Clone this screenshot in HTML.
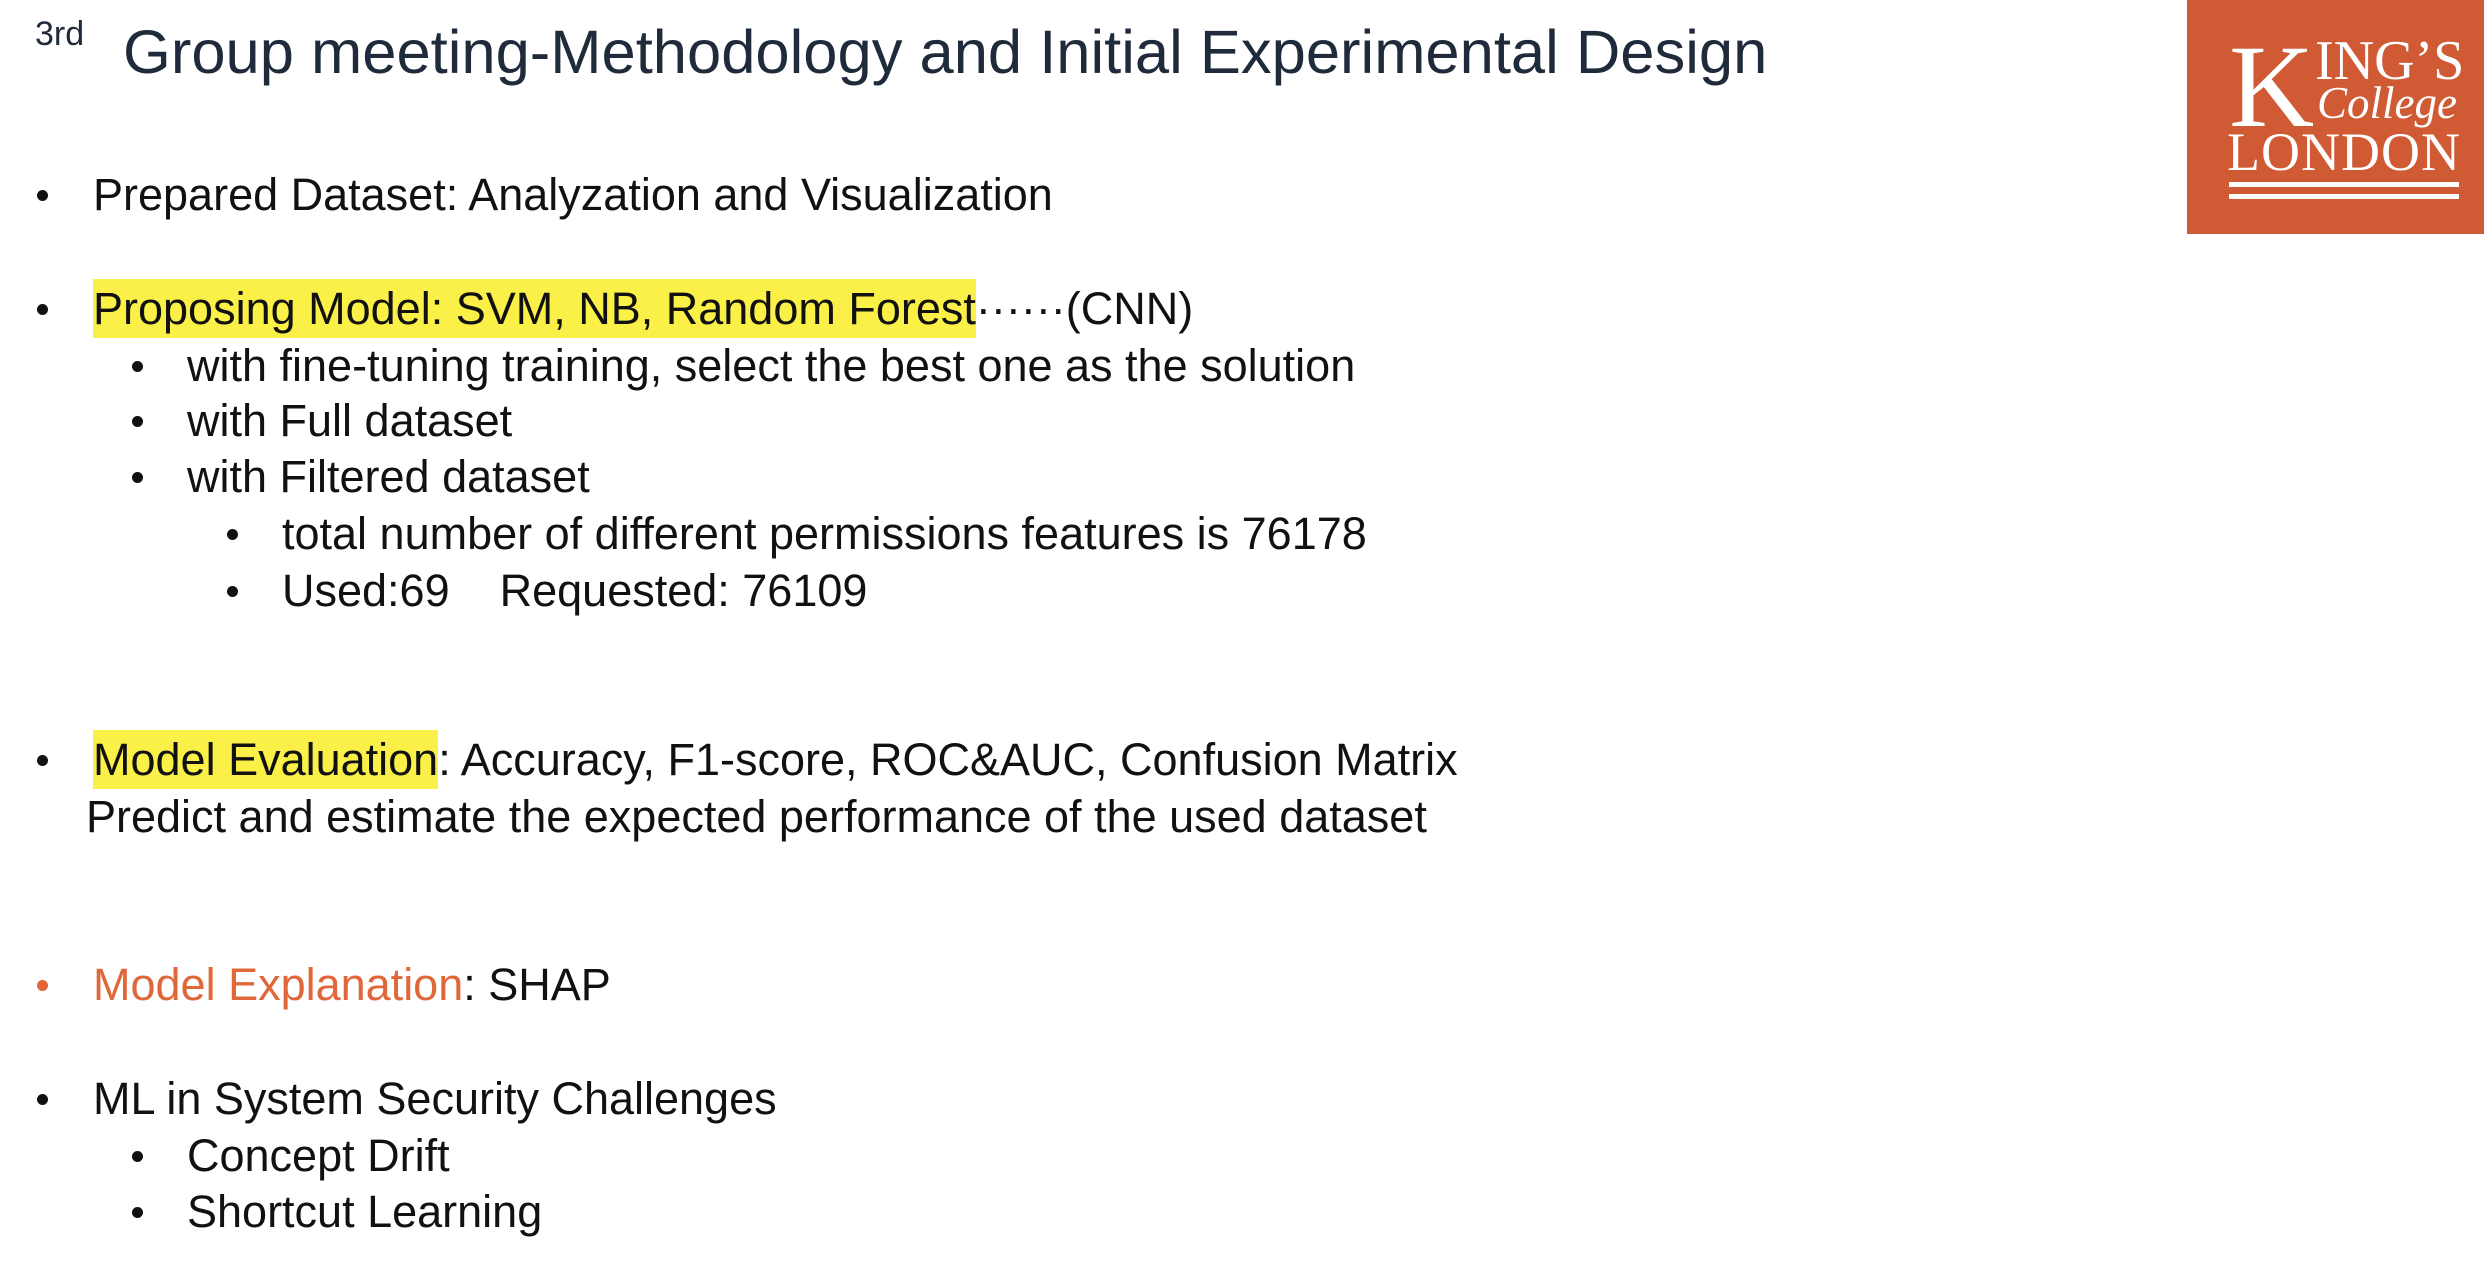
<!DOCTYPE html>
<html><head><meta charset="utf-8"><style>
html,body{margin:0;padding:0;background:#fff;}
body{width:2484px;height:1266px;position:relative;overflow:hidden;font-family:"Liberation Sans","Noto Sans CJK SC",sans-serif;color:#111;}
.t{position:absolute;white-space:nowrap;font-size:45px;line-height:56px;height:56px;}
.b{position:absolute;width:11px;height:11px;border-radius:50%;background:#111;}
.hl{background:#fbf048;padding:4px 0;}
.logo{position:absolute;left:2187px;top:0;width:297px;height:234px;background:#cf5a34;color:#fff;font-family:"Liberation Serif",serif;}
</style></head><body>
<div class="t" style="left:35px;top:14px;font-size:34px;line-height:40px;color:#1f2a3a">3rd</div>
<div class="t" style="left:123px;top:18px;font-size:61.5px;line-height:70px;height:70px;color:#1f2a3a">Group meeting-Methodology and Initial Experimental Design</div>

<div class="logo">
  <div style="position:absolute;left:42px;top:28px;font-size:118px;line-height:118px">K</div>
  <div style="position:absolute;left:128px;top:32px;font-size:56px;line-height:58px">ING’S</div>
  <div style="position:absolute;left:130px;top:78px;font-size:45px;line-height:50px;font-style:italic">College</div>
  <div style="position:absolute;left:40px;top:124px;font-size:54px;line-height:56px;letter-spacing:1px">LONDON</div>
  <div style="position:absolute;left:42px;top:182px;width:230px;height:5px;background:#fff"></div>
  <div style="position:absolute;left:42px;top:194px;width:230px;height:5px;background:#fff"></div>
</div>

<div class="b" style="left:37px;top:190px"></div>
<div class="t" style="left:93px;top:167px">Prepared Dataset: Analyzation and Visualization</div>

<div class="b" style="left:37px;top:304px"></div>
<div class="t" style="left:93px;top:281px"><span class="hl">Proposing Model: SVM, NB, Random Forest</span>······(CNN)</div>

<div class="b" style="left:132px;top:361px"></div>
<div class="t" style="left:187px;top:338px">with fine-tuning training, select the best one as the solution</div>
<div class="b" style="left:132px;top:416px"></div>
<div class="t" style="left:187px;top:393px">with Full dataset</div>
<div class="b" style="left:132px;top:472px"></div>
<div class="t" style="left:187px;top:449px">with Filtered dataset</div>

<div class="b" style="left:227px;top:529px"></div>
<div class="t" style="left:282px;top:506px">total number of different permissions features is 76178</div>
<div class="b" style="left:227px;top:586px"></div>
<div class="t" style="left:282px;top:563px">Used:69&nbsp;&nbsp;&nbsp;&nbsp;Requested: 76109</div>

<div class="b" style="left:37px;top:755px"></div>
<div class="t" style="left:93px;top:732px"><span class="hl">Model Evaluation</span>: Accuracy, F1-score, ROC&amp;AUC, Confusion Matrix</div>
<div class="t" style="left:86px;top:789px">Predict and estimate the expected performance of the used dataset</div>

<div class="b" style="left:37px;top:980px;background:#e0673a"></div>
<div class="t" style="left:93px;top:957px"><span style="color:#e0673a">Model Explanation</span>: SHAP</div>

<div class="b" style="left:37px;top:1094px"></div>
<div class="t" style="left:93px;top:1071px">ML in System Security Challenges</div>
<div class="b" style="left:132px;top:1151px"></div>
<div class="t" style="left:187px;top:1128px">Concept Drift</div>
<div class="b" style="left:132px;top:1207px"></div>
<div class="t" style="left:187px;top:1184px">Shortcut Learning</div>
</body></html>
